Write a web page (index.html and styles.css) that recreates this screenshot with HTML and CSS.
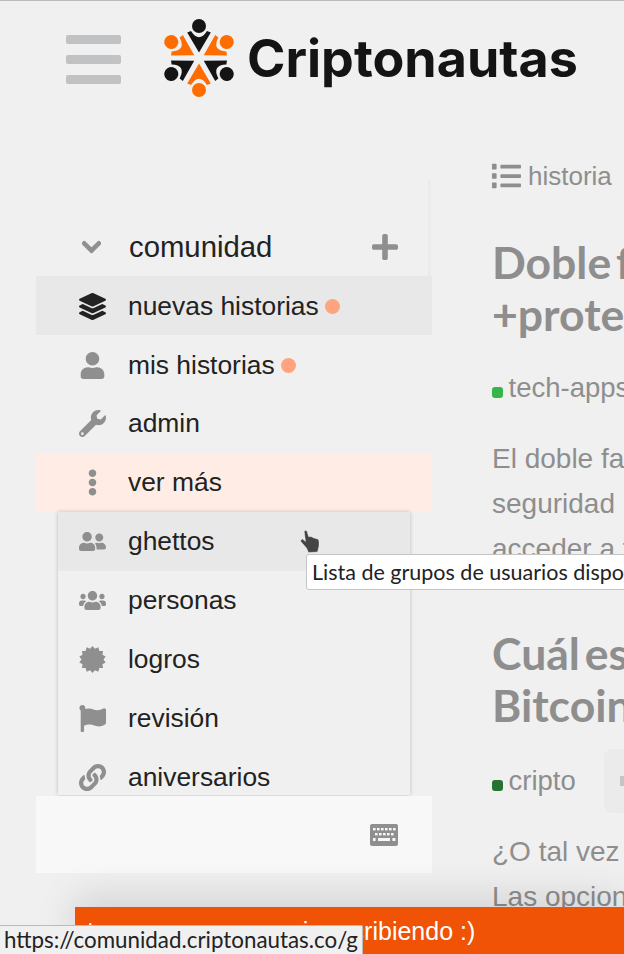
FILE: index.html
```html
<!DOCTYPE html>
<html lang="es">
<head>
<meta charset="utf-8">
<title>Criptonautas</title>
<link rel="stylesheet" href="styles.css">
</head>
<body>
<div class="page">
  <header class="header">
    <div class="burger"><span></span><span></span><span></span></div>
    <svg class="logo-mark" viewBox="-36 -40 72 80" aria-hidden="true">
      <defs>
        <g id="fig"><circle cx="0" cy="-32" r="7"/><path d="M-11.800 -25.500L-8 -27Q0 -14.500 8 -27L11.800 -25.500L0 -5.500Z"/></g>
      </defs>
      <use href="#fig" class="lk"/>
      <use href="#fig" class="lo" transform="rotate(60)"/>
      <use href="#fig" class="lk" transform="rotate(120)"/>
      <use href="#fig" class="lo" transform="rotate(180)"/>
      <use href="#fig" class="lk" transform="rotate(240)"/>
      <use href="#fig" class="lo" transform="rotate(300)"/>
    </svg>
    <span class="wordmark">Criptonautas</span>
  </header>

  <main class="main">
    <aside class="sidebar">
      <div class="side-head">
        <div class="head-row">
          <svg class="ic-chev" viewBox="0 0 448 512"><path d="M207.029 381.476L12.686 187.132c-9.373-9.373-9.373-24.569 0-33.941l22.667-22.667c9.357-9.357 24.522-9.375 33.901-.04L224 284.505l154.745-154.021c9.379-9.335 24.544-9.317 33.901.04l22.667 22.667c9.373 9.373 9.373 24.569 0 33.941L240.971 381.476c-9.373 9.372-24.569 9.372-33.942 0z"/></svg>
          <span class="head-title">comunidad</span>
          <svg class="ic-plus" viewBox="0 0 448 512"><path d="M416 208H272V64c0-17.67-14.33-32-32-32h-32c-17.67 0-32 14.33-32 32v144H32c-17.67 0-32 14.33-32 32v32c0 17.67 14.33 32 32 32h144v144c0 17.67 14.33 32 32 32h32c17.67 0 32-14.33 32-32V304h144c17.67 0 32-14.33 32-32v-32c0-17.67-14.33-32-32-32z"/></svg>
        </div>
      </div>
      <a class="row row-low row-active">
        <span class="ico"><svg class="dark" viewBox="0 0 512 512"><path d="M12.41 148.02l232.94 105.67c6.8 3.09 14.49 3.09 21.29 0l232.94-105.67c16.55-7.51 16.55-32.52 0-40.03L266.65 2.31a25.607 25.607 0 0 0-21.29 0L12.41 107.98c-16.55 7.51-16.55 32.53 0 40.04zm487.18 88.28l-58.09-26.33-161.64 73.27c-7.56 3.43-15.59 5.17-23.86 5.17s-16.29-1.74-23.86-5.17L70.51 209.97l-58.1 26.33c-16.55 7.5-16.55 32.5 0 40l232.94 105.59c6.8 3.08 14.49 3.08 21.29 0L499.59 276.3c16.55-7.5 16.55-32.5 0-40zm0 127.8l-57.87-26.23-161.86 73.37c-7.56 3.43-15.59 5.17-23.86 5.17s-16.29-1.74-23.86-5.17L70.29 337.87 12.41 364.1c-16.55 7.5-16.55 32.5 0 40l232.94 105.59c6.8 3.08 14.49 3.08 21.29 0L499.59 404.1c16.55-7.5 16.55-32.5 0-40z"/></svg></span>
        <span>nuevas historias</span><i class="dot"></i>
      </a>
      <a class="row row-low">
        <span class="ico"><svg viewBox="0 0 448 512"><path d="M224 256c70.7 0 128-57.3 128-128S294.7 0 224 0 96 57.3 96 128s57.3 128 128 128zm89.6 32h-16.7c-22.2 10.2-46.9 16-72.9 16s-50.6-5.8-72.9-16h-16.7C60.2 288 0 348.2 0 422.4V464c0 26.5 21.5 48 48 48h352c26.5 0 48-21.5 48-48v-41.6c0-74.2-60.2-134.4-134.4-134.4z"/></svg></span>
        <span>mis historias</span><i class="dot"></i>
      </a>
      <a class="row">
        <span class="ico"><svg viewBox="0 0 512 512"><path d="M507.73 109.1c-2.24-9.03-13.54-12.09-20.12-5.51l-74.36 74.36-67.88-11.31-11.31-67.88 74.36-74.36c6.62-6.62 3.43-17.9-5.66-20.16-47.38-11.74-99.55.91-136.58 37.93-39.64 39.64-50.55 97.1-34.05 147.2L18.74 402.76c-24.99 24.99-24.99 65.51 0 90.5 24.99 24.99 65.51 24.99 90.5 0l213.21-213.21c50.12 16.71 107.47 5.68 147.37-34.22 37.07-37.07 49.7-89.32 37.91-136.73zM64 472c-13.25 0-24-10.75-24-24 0-13.26 10.75-24 24-24s24 10.74 24 24c0 13.25-10.75 24-24 24z"/></svg></span>
        <span>admin</span>
      </a>
      <a class="row row-open">
        <span class="ico"><svg viewBox="0 0 192 512"><path d="M96 184c39.8 0 72 32.2 72 72s-32.2 72-72 72-72-32.2-72-72 32.2-72 72-72zM24 80c0 39.8 32.2 72 72 72s72-32.2 72-72S135.8 8 96 8 24 40.2 24 80zm0 352c0 39.8 32.2 72 72 72s72-32.2 72-72-32.2-72-72-72-72 32.2-72 72z"/></svg></span>
        <span>ver más</span>
      </a>
      <div class="popup">
        <a class="row pop-row pop-hover">
          <span class="ico"><svg viewBox="0 0 640 512"><path d="M192 256c61.9 0 112-50.1 112-112S253.9 32 192 32 80 82.1 80 144s50.1 112 112 112zm76.8 32h-8.3c-20.8 10-43.9 16-68.5 16s-47.6-6-68.5-16h-8.3C51.6 288 0 339.6 0 403.2V432c0 26.5 21.5 48 48 48h288c26.5 0 48-21.5 48-48v-28.8c0-63.6-51.6-115.2-115.2-115.2zM480 256c53 0 96-43 96-96s-43-96-96-96-96 43-96 96 43 96 96 96zm48 32h-3.8c-13.9 4.8-28.6 8-44.2 8s-30.3-3.2-44.2-8H432c-20.4 0-39.2 5.9-55.7 15.4 24.4 26.3 39.7 61.2 39.7 99.8v38.4c0 2.2-.5 4.3-.6 6.4H592c26.5 0 48-21.5 48-48 0-61.9-50.1-112-112-112z"/></svg></span>
          <span>ghettos</span>
        </a>
        <a class="row pop-row">
          <span class="ico"><svg viewBox="0 0 640 512"><path d="M96 224c35.3 0 64-28.7 64-64s-28.7-64-64-64-64 28.7-64 64 28.7 64 64 64zm448 0c35.3 0 64-28.7 64-64s-28.7-64-64-64-64 28.7-64 64 28.7 64 64 64zm32 32h-64c-17.6 0-33.5 7.1-45.1 18.6 40.3 22.1 68.9 62 75.1 109.4h66c17.7 0 32-14.3 32-32v-32c0-35.3-28.7-64-64-64zm-256 0c61.9 0 112-50.1 112-112S381.9 32 320 32 208 82.1 208 144s50.1 112 112 112zm76.8 32h-8.3c-20.8 10-43.9 16-68.5 16s-47.6-6-68.5-16h-8.3C179.6 288 128 339.6 128 403.2V432c0 26.5 21.5 48 48 48h288c26.5 0 48-21.5 48-48v-28.8c0-63.6-51.6-115.2-115.2-115.2zm-223.7-13.4C161.5 263.1 145.6 256 128 256H64c-35.3 0-64 28.7-64 64v32c0 17.7 14.3 32 32 32h65.9c6.3-47.4 34.9-87.3 75.2-109.4z"/></svg></span>
          <span>personas</span>
        </a>
        <a class="row pop-row">
          <span class="ico"><svg viewBox="0 0 24 24"><polygon points="12,0 14.18,2.45 17.21,1.19 18.11,4.34 21.38,4.52 20.83,7.75 23.7,9.33 21.8,12 23.7,14.67 20.83,16.25 21.38,19.48 18.11,19.66 17.21,22.81 14.18,21.55 12,24 9.82,21.55 6.79,22.81 5.89,19.66 2.62,19.48 3.17,16.25 .3,14.67 2.2,12 .3,9.33 3.17,7.75 2.62,4.52 5.89,4.34 6.79,1.19 9.82,2.45"/></svg></span>
          <span>logros</span>
        </a>
        <a class="row pop-row">
          <span class="ico"><svg viewBox="0 0 512 512"><path d="M349.565 98.783C295.978 98.783 251.721 64 184.348 64c-24.955 0-47.309 4.384-68.045 12.013a55.947 55.947 0 0 0 3.586-23.562C118.117 24.015 94.806 1.206 66.338.048 34.345-1.254 8 24.296 8 56c0 19.026 9.497 35.825 24 45.945V488c0 13.255 10.745 24 24 24h16c13.255 0 24-10.745 24-24v-94.4c28.311-12.064 63.582-22.122 114.435-22.122 53.588 0 97.844 34.783 165.217 34.783 48.169 0 86.667-16.294 122.505-40.858C506.84 359.452 512 349.571 512 339.045v-243.1c0-23.393-24.269-38.87-45.485-29.016-34.338 15.948-76.454 31.854-116.95 31.854z"/></svg></span>
          <span>revisión</span>
        </a>
        <a class="row pop-row">
          <span class="ico"><svg viewBox="0 0 512 512"><path d="M326.612 185.391c59.747 59.809 58.927 155.698.36 214.59-.11.12-.24.25-.36.37l-67.2 67.2c-59.27 59.27-155.699 59.262-214.96 0-59.27-59.26-59.27-155.7 0-214.96l37.106-37.106c9.84-9.84 26.786-3.3 27.294 10.606.648 17.722 3.826 35.527 9.69 52.721 1.986 5.822.567 12.262-3.783 16.612l-13.087 13.087c-28.026 28.026-28.905 73.66-1.155 101.96 28.024 28.579 74.086 28.749 102.325.51l67.2-67.19c28.191-28.191 28.073-73.757 0-101.83-3.701-3.694-7.429-6.564-10.341-8.569a16.037 16.037 0 0 1-6.947-12.606c-.396-10.567 3.348-21.456 11.698-29.806l21.054-21.055c5.521-5.521 14.182-6.199 20.584-1.731a152.482 152.482 0 0 1 20.522 17.197zM467.547 44.449c-59.261-59.262-155.69-59.27-214.96 0l-67.2 67.2c-.12.12-.25.25-.36.37-58.566 58.892-59.387 154.781.36 214.59a152.454 152.454 0 0 0 20.521 17.196c6.402 4.468 15.064 3.789 20.584-1.731l21.054-21.055c8.35-8.35 12.094-19.239 11.698-29.806a16.037 16.037 0 0 0-6.947-12.606c-2.912-2.005-6.64-4.875-10.341-8.569-28.073-28.073-28.191-73.639 0-101.83l67.2-67.19c28.239-28.239 74.3-28.069 102.325.51 27.75 28.3 26.872 73.934-1.155 101.96l-13.087 13.087c-4.35 4.35-5.769 10.79-3.783 16.612 5.864 17.194 9.042 34.999 9.69 52.721.509 13.906 17.454 20.446 27.294 10.606l37.106-37.106c59.271-59.259 59.271-155.699.001-214.959z"/></svg></span>
          <span>aniversarios</span>
        </a>
      </div>
      <div class="panel">
        <svg class="ic-key" viewBox="0 0 28 22">
          <rect width="28" height="22" rx="2" class="key-body"/>
          <g class="key-holes">
            <rect x="3" y="4" width="2.6" height="2.4"/><rect x="7" y="4" width="2.6" height="2.4"/><rect x="11" y="4" width="2.6" height="2.4"/><rect x="15" y="4" width="2.6" height="2.4"/><rect x="19" y="4" width="2.6" height="2.4"/><rect x="23" y="4" width="2.6" height="2.4"/>
            <rect x="5" y="9" width="2.6" height="2.4"/><rect x="9" y="9" width="2.6" height="2.4"/><rect x="13" y="9" width="2.6" height="2.4"/><rect x="17" y="9" width="2.6" height="2.4"/><rect x="21" y="9" width="2.6" height="2.4"/>
            <rect x="3" y="14" width="2.6" height="3"/><rect x="8" y="14" width="12" height="3"/><rect x="22.4" y="14" width="3" height="3"/>
          </g>
        </svg>
      </div>
    </aside>

    <section class="feed">
      <div class="crumb">
        <svg class="ic-list" viewBox="0 0 512 512"><path d="M80 368H16a16 16 0 0 0-16 16v64a16 16 0 0 0 16 16h64a16 16 0 0 0 16-16v-64a16 16 0 0 0-16-16zm0-320H16A16 16 0 0 0 0 64v64a16 16 0 0 0 16 16h64a16 16 0 0 0 16-16V64a16 16 0 0 0-16-16zm0 160H16a16 16 0 0 0-16 16v64a16 16 0 0 0 16 16h64a16 16 0 0 0 16-16v-64a16 16 0 0 0-16-16zm416 176H176a16 16 0 0 0-16 16v32a16 16 0 0 0 16 16h320a16 16 0 0 0 16-16v-32a16 16 0 0 0-16-16zm0-320H176a16 16 0 0 0-16 16v32a16 16 0 0 0 16 16h320a16 16 0 0 0 16-16V80a16 16 0 0 0-16-16zm0 160H176a16 16 0 0 0-16 16v32a16 16 0 0 0 16 16h320a16 16 0 0 0 16-16v-32a16 16 0 0 0-16-16z"/></svg>
        <span>historia</span>
      </div>
      <article class="story story-first">
        <h2 class="title">Doble factor<br>+protección</h2>
        <div class="tags"><i class="tag-dot tag-green"></i><span>tech-apps</span></div>
        <p class="excerpt">El doble factor<br>seguridad para<br>acceder a tus</p>
      </article>
      <article class="story story-second">
        <h2 class="title">Cuál es el<br>Bitcoin hoy</h2>
        <div class="tags"><i class="tag-dot tag-dark"></i><span>cripto</span><span class="tag-btn"><b></b></span></div>
        <p class="excerpt">¿O tal vez no?<br>Las opciones</p>
      </article>
    </section>
  </main>

  <div class="typing"><span class="typing-lead">tenemos unos aqui</span> escribiendo :)</div>
  <div class="status">https://comunidad.criptonautas.co/g</div>
  <div class="tooltip">Lista de grupos de usuarios disponibles</div>
  <svg class="cursor" viewBox="0 0 20 24">
    <path d="M4.2 1.200Q5.500 -.3 7 1L8.500 6.500L11.500 6.800L14 8L17.500 9Q19 9.500 19 11.500L19 16L17.500 22L8.500 22.500L6.500 18L.8 11.500Q.3 9.500 2.500 9L5.500 11.500Z"/>
  </svg>
</div>
</body>
</html>
```
FILE: styles.css
```css
* { box-sizing: border-box; }
html, body { margin: 0; padding: 0; }
body { background: #f0f0f0; color: #222; font-family: "Liberation Sans", Arial, sans-serif; }
.page { position: relative; width: 624px; height: 954px; overflow: hidden; border-top: 1px solid #bbb; }

.header { display: flex; align-items: flex-start; height: 159px; padding-left: 66px; }
.burger { display: flex; flex-direction: column; gap: 11px; width: 55px; margin-top: 34px; }
.burger span { display: block; height: 9px; border-radius: 2px; background: #c1c2c4; }
.logo-mark { width: 72px; height: 80px; margin: 17px 0 0 42px; flex: none; }
.lk { fill: #141414; }
.lo { fill: #ff6d00; }
.wordmark { margin: 28px 0 0 12px; font-family: Inter, sans-serif; font-weight: 700; font-size: 52px; line-height: 60px; color: #141414; white-space: nowrap; }

.main { display: flex; align-items: flex-start; }
.sidebar { width: 396px; margin: 20px 0 0 36px; flex: none; }
.side-head { height: 96px; padding-top: 38px; margin-right: 1px; border-right: 3px solid #ebebeb; }
.head-row { display: flex; align-items: center; height: 58px; padding-left: 46px; }
.ic-chev { width: 19px; height: 22px; fill: #8f8f8f; stroke: #8f8f8f; stroke-width: 26; flex: none; }
.head-title { margin-left: 28px; font-size: 29.3px; }
.ic-plus { width: 26px; height: 30px; margin-left: auto; margin-right: 30px; fill: #8f8f8f; }

.row { display: flex; align-items: center; height: 59px; font-size: 26.4px; color: #222; }
.row-low { padding-top: 2px; }
.ico { display: flex; justify-content: center; width: 92px; padding-left: 20px; flex: none; }
.ico svg { width: 27px; height: 27px; fill: #8f8f8f; }
.ico svg.dark { fill: #222; }
.row-active { background: #e8e8e8; }
.row-open { background: #ffede5; }
.dot { width: 15px; height: 15px; margin-left: 6px; border-radius: 50%; background: #ffa47e; }

.popup { height: 283px; margin: 0 22px 1px; overflow: hidden; background: #f0f0f0; box-shadow: 0 0 4px rgba(0, 0, 0, .22); }
.pop-row .ico { width: 70px; padding: 0 2px 0 0; justify-content: center; }
.pop-hover { background: #e8e8e8; }

.panel { display: flex; align-items: center; justify-content: flex-end; height: 77px; padding-right: 34px; background: #f8f8f8; }
.ic-key { width: 28px; height: 22px; }
.key-body { fill: #8f8f8f; }
.key-holes { fill: #f8f8f8; }

.feed { width: 132px; margin-left: 60px; overflow: hidden; flex: none; color: #8e8e8e; }
.crumb { display: flex; align-items: center; height: 32px; margin-left: -1px; font-size: 26px; white-space: nowrap; }
.ic-list { width: 30px; height: 30px; margin-right: 7px; fill: #8e8e8e; flex: none; }
.story { margin: 0; white-space: nowrap; }
.story-first { margin-top: 44px; height: 391px; }
.title { margin: 0; font-family: Lato, sans-serif; font-weight: 700; font-size: 44.5px; line-height: 52px; word-spacing: -6px; color: #8e8e8e; }
.tags { display: flex; align-items: center; height: 64px; margin-top: 16px; font-size: 27.5px; }
.story-second .tags { margin-top: 18px; }
.tag-dot { width: 11px; height: 11px; margin: 8px 5.5px 0 0; border-radius: 3px; flex: none; }
.tag-green { background: #36b548; }
.tag-dark { background: #267233; }
.tag-btn { display: flex; align-items: center; width: 60px; height: 64px; margin-left: 28px; padding-left: 16px; border-radius: 8px; background: #ebebeb; }
.tag-btn b { display: block; width: 12px; height: 10px; background: #c4c4c4; }
.excerpt { margin: 17px 0 0; font-size: 28px; line-height: 44.8px; color: #8e8e8e; }
.story-first .excerpt { height: 130px; overflow: hidden; }

.typing { position: absolute; left: 75px; right: 0; bottom: 0; height: 47px; padding: 8px 0 0 12px; background: #f05206; color: #fff; font-size: 25px; line-height: 32px; white-space: nowrap; box-shadow: 0 -8px 40px rgba(0, 0, 0, .14); }
.typing-lead { margin-right: 10px; word-spacing: 5px; }
.status { position: absolute; left: 0; bottom: 0; width: 363px; height: 29px; padding-left: 4px; background: #f0f0f0; border-top: 1px solid #bbb; border-right: 1px solid #bbb; border-top-right-radius: 2px; font-family: Lato, sans-serif; font-size: 22.35px; line-height: 28px; color: #222; white-space: nowrap; }
.tooltip { position: absolute; left: 306px; top: 553px; width: 420px; height: 36px; padding-left: 5px; background: #fff; border: 1px solid #c4c4c4; border-radius: 3px; font-family: Lato, sans-serif; font-size: 21.5px; line-height: 34px; color: #222; white-space: nowrap; }
.cursor { position: absolute; left: 300px; top: 529px; width: 20px; height: 24px; fill: #444; stroke: #f6f6f6; stroke-width: .4; }
```
